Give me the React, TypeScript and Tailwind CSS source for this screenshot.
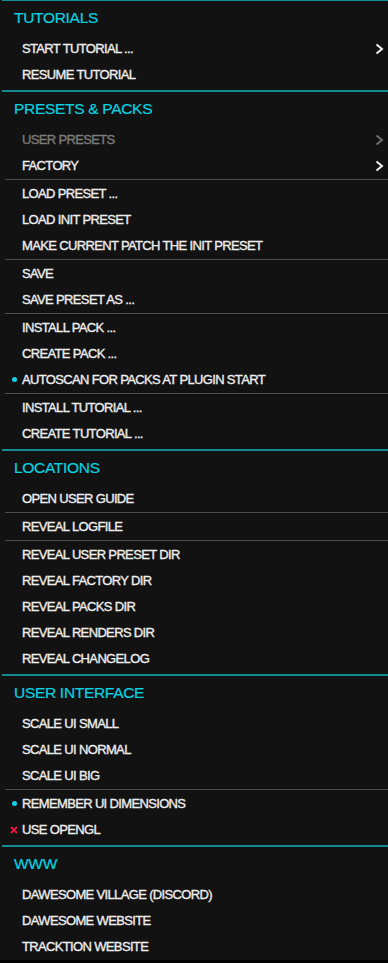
type Row =
  | { kind: "item"; label: string; sub?: boolean; disabled?: boolean; mark?: "dot" | "x" }
  | { kind: "sep" };

type Section = { title: string; rows: Row[] };

const item = (label: string, extra: Partial<{ sub: boolean; disabled: boolean; mark: "dot" | "x" }> = {}): Row => ({
  kind: "item",
  label,
  ...extra,
});
const sep: Row = { kind: "sep" };

const sections: Section[] = [
  {
    title: "TUTORIALS",
    rows: [item("START TUTORIAL ...", { sub: true }), item("RESUME TUTORIAL")],
  },
  {
    title: "PRESETS & PACKS",
    rows: [
      item("USER PRESETS", { sub: true, disabled: true }),
      item("FACTORY", { sub: true }),
      sep,
      item("LOAD PRESET ..."),
      item("LOAD INIT PRESET"),
      item("MAKE CURRENT PATCH THE INIT PRESET"),
      sep,
      item("SAVE"),
      item("SAVE PRESET AS ..."),
      sep,
      item("INSTALL PACK ..."),
      item("CREATE PACK ..."),
      item("AUTOSCAN FOR PACKS AT PLUGIN START", { mark: "dot" }),
      sep,
      item("INSTALL TUTORIAL ..."),
      item("CREATE TUTORIAL ..."),
    ],
  },
  {
    title: "LOCATIONS",
    rows: [
      item("OPEN USER GUIDE"),
      sep,
      item("REVEAL LOGFILE"),
      sep,
      item("REVEAL USER PRESET DIR"),
      item("REVEAL FACTORY DIR"),
      item("REVEAL PACKS DIR"),
      item("REVEAL RENDERS DIR"),
      item("REVEAL CHANGELOG"),
    ],
  },
  {
    title: "USER INTERFACE",
    rows: [
      item("SCALE UI SMALL"),
      item("SCALE UI NORMAL"),
      item("SCALE UI BIG"),
      sep,
      item("REMEMBER UI DIMENSIONS", { mark: "dot" }),
      item("USE OPENGL", { mark: "x" }),
    ],
  },
  {
    title: "WWW",
    rows: [item("DAWESOME VILLAGE (DISCORD)"), item("DAWESOME WEBSITE"), item("TRACKTION WEBSITE")],
  },
];

function Chevron({ dim }: { dim?: boolean }) {
  return (
    <svg width="9" height="12" viewBox="0 0 9 12" className={dim ? "text-[#6f6f6f]" : "text-[#f2f2f2]"}>
      <polyline points="1.5,1.5 7,6 1.5,10.5" fill="none" stroke="currentColor" strokeWidth="2" />
    </svg>
  );
}

function Mark({ type }: { type?: "dot" | "x" }) {
  if (type === "dot") return <span className="ml-[12px] block size-[5px] rounded-full bg-[#12d3e4]" />;
  if (type === "x")
    return (
      <svg width="8" height="8" viewBox="0 0 8 8" className="ml-[10px]">
        <path d="M1 1 L7 7 M7 1 L1 7" stroke="#e3143f" strokeWidth="2" />
      </svg>
    );
  return null;
}

function MenuRow({ row }: { row: Row }) {
  if (row.kind === "sep") {
    return <div className="h-[2px] ml-[5px] border-t border-[#4d4d4d]" />;
  }
  return (
    <div className="flex h-[26px] items-center pb-[2px]">
      <div className="flex w-[22px] shrink-0 items-center pt-[1px]">
        <Mark type={row.mark} />
      </div>
      <span
        className={`text-[13px] leading-none tracking-[-0.65px] [-webkit-text-stroke:0.35px_currentcolor] ${
          row.disabled ? "text-[#7c7c7c]" : "text-[#eeeeee]"
        }`}
      >
        {row.label}
      </span>
      {row.sub && (
        <div className="ml-auto mr-[4px] flex items-center pt-[1px]">
          <Chevron dim={row.disabled} />
        </div>
      )}
    </div>
  );
}

export default function App() {
  return (
    <div className="h-[963px] w-[388px] bg-black font-['Liberation_Sans',Arial,sans-serif]">
      <div className="h-[960px] overflow-hidden bg-[#121212]">
        {sections.map((section, i) => (
          <section key={section.title} className={i === 0 ? "" : "pt-[2px]"}>
            <div className={`ml-[2px] bg-[#158a90] ${i === 0 ? "h-px" : "h-[2px]"}`} />
            <div className="flex h-[35px] items-center pl-[14px] pb-[1px] text-[15.5px] leading-none tracking-[-0.3px] text-[#05d3e0] [-webkit-text-stroke:0.2px_currentcolor]">
              {section.title}
            </div>
            {section.rows.map((row, j) => (
              <MenuRow key={j} row={row} />
            ))}
          </section>
        ))}
      </div>
    </div>
  );
}
